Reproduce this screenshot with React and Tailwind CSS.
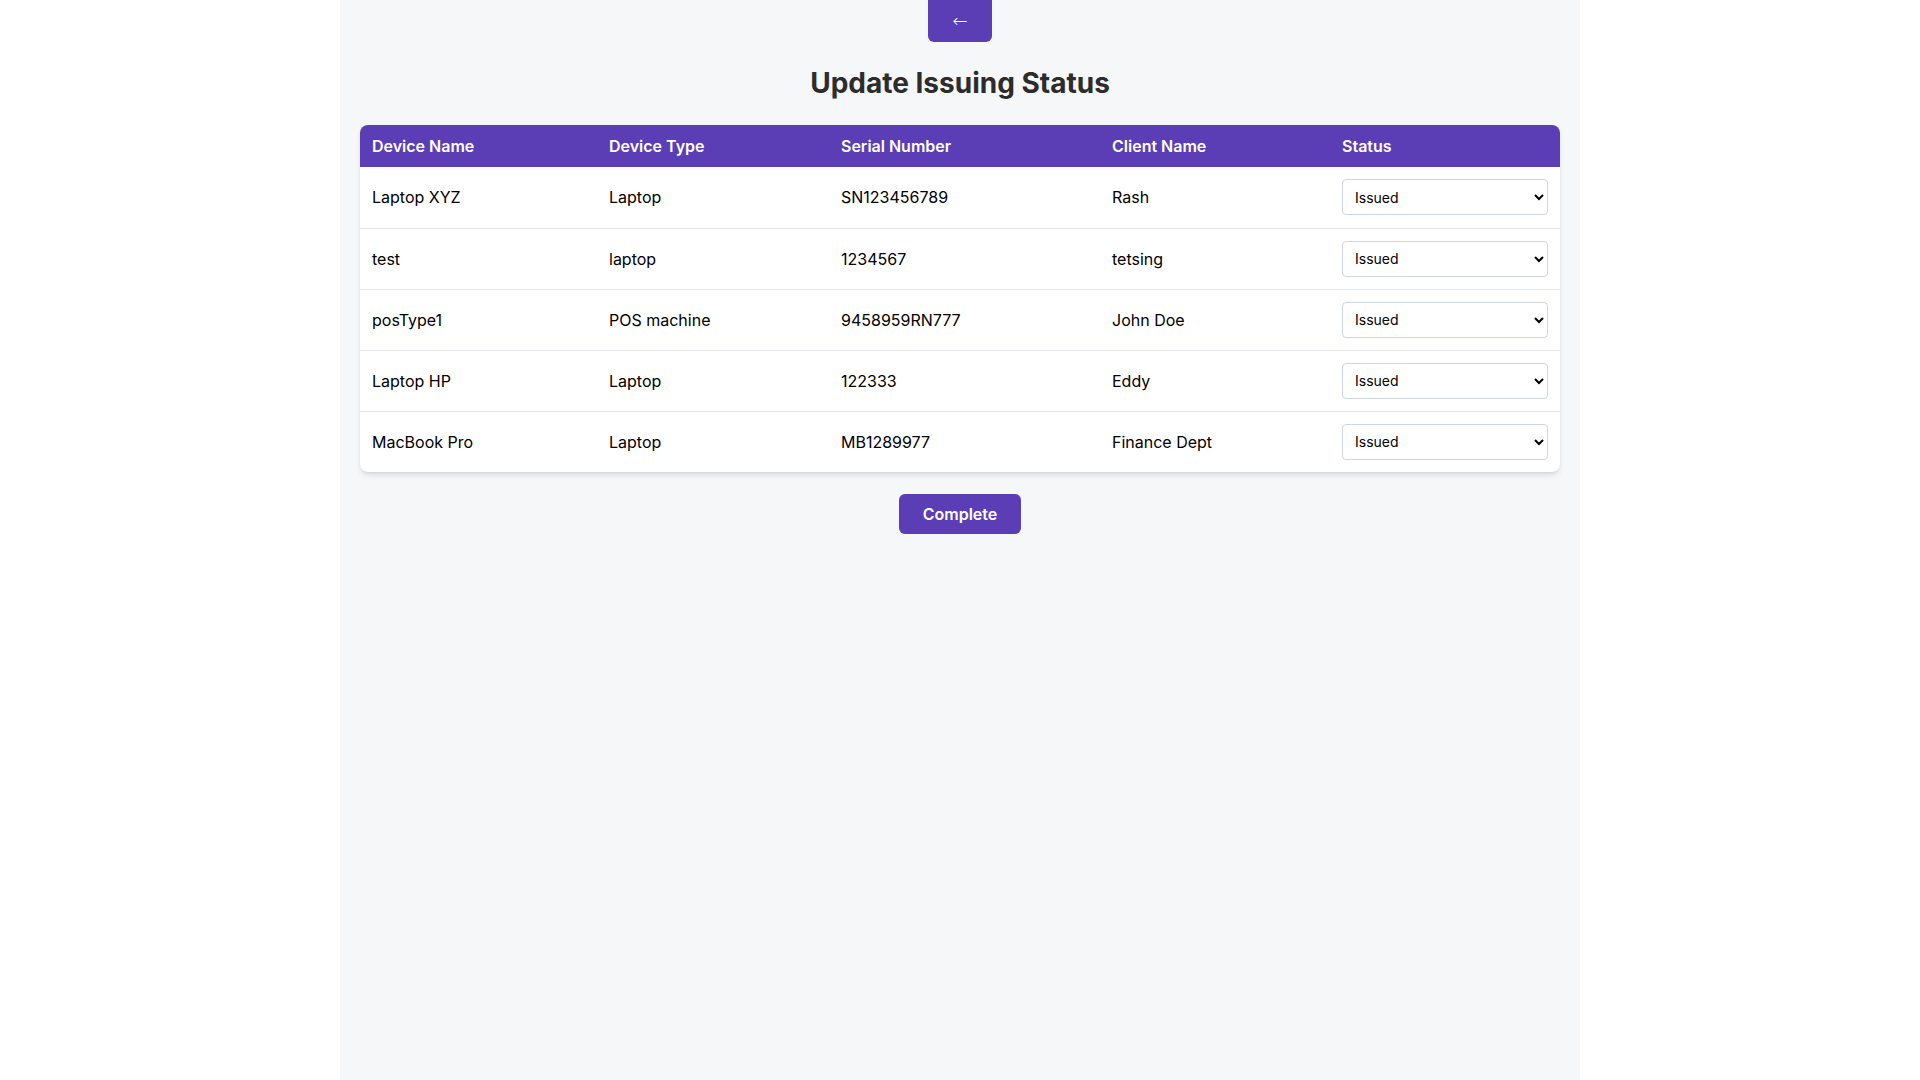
import { useState } from 'react';

const devices = [
  { id: 1, name: 'Laptop XYZ', type: 'Laptop', serial: 'SN123456789', client: 'Rash' },
  { id: 2, name: 'test', type: 'laptop', serial: '1234567', client: 'tetsing' },
  { id: 3, name: 'posType1', type: 'POS machine', serial: '9458959RN777', client: 'John Doe' },
  { id: 4, name: 'Laptop HP', type: 'Laptop', serial: '122333', client: 'Eddy' },
  { id: 5, name: 'MacBook Pro', type: 'Laptop', serial: 'MB1289977', client: 'Finance Dept' },
];

export default function App() {
  const [statuses, setStatuses] = useState(() =>
    Object.fromEntries(devices.map((d) => [d.id, 'Issued']))
  );

  function handleChange(id, value) {
    setStatuses((prev) => ({ ...prev, [id]: value }));
  }

  return (
    <div className="min-h-screen bg-white font-['Inter','Liberation_Sans',sans-serif]">
      <div className="mx-auto flex min-h-screen w-[1240px] flex-col items-center bg-[#f6f7f9] px-5">
        <button
          type="button"
          className="-mt-1.5 h-12 w-16 rounded-md bg-[#5b3db5] pt-1.5 font-['DejaVu_Sans',sans-serif] text-lg font-light text-white"
        >
          ←
        </button>

        <h1 className="mt-[23px] mb-6 text-[28px] leading-9 font-bold text-[#2c2c2c]">
          Update Issuing Status
        </h1>

        <div className="w-full overflow-hidden rounded-lg bg-white shadow-md">
          <table className="w-full border-collapse text-left">
            <thead>
              <tr className="bg-[#5b3db5] text-white">
                <th className="h-[42px] w-[237px] px-3 text-base font-semibold">Device Name</th>
                <th className="h-[42px] w-[232px] px-3 text-base font-semibold">Device Type</th>
                <th className="h-[42px] w-[271px] px-3 text-base font-semibold">Serial Number</th>
                <th className="h-[42px] w-[230px] px-3 text-base font-semibold">Client Name</th>
                <th className="h-[42px] px-3 text-base font-semibold">Status</th>
              </tr>
            </thead>
            <tbody>
              {devices.map((device, i) => (
                <tr
                  key={device.id}
                  className={i < devices.length - 1 ? 'border-b border-gray-200' : ''}
                >
                  <td className="h-[61px] px-3 text-base text-black">{device.name}</td>
                  <td className="h-[61px] px-3 text-base text-black">{device.type}</td>
                  <td className="h-[61px] px-3 text-base text-black">{device.serial}</td>
                  <td className="h-[61px] px-3 text-base text-black">{device.client}</td>
                  <td className="h-[61px] px-3">
                    <select
                      value={statuses[device.id]}
                      onChange={(e) => handleChange(device.id, e.target.value)}
                      className="h-9 w-full rounded border border-gray-300 bg-white px-2 text-sm text-black"
                    >
                      <option>Issued</option>
                      <option>Returned</option>
                      <option>Pending</option>
                    </select>
                  </td>
                </tr>
              ))}
            </tbody>
          </table>
        </div>

        <button
          type="button"
          className="mt-[22px] h-10 rounded-md bg-[#5b3db5] px-6 text-base font-semibold text-white"
        >
          Complete
        </button>
      </div>
    </div>
  );
}
